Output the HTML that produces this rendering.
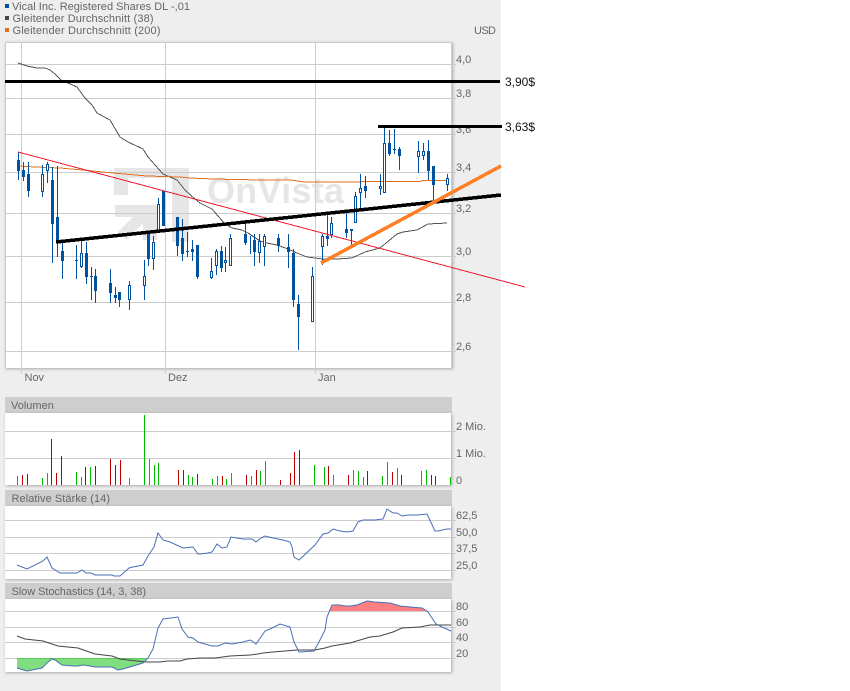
<!DOCTYPE html>
<html><head><meta charset="utf-8"><style>
html,body{margin:0;padding:0;background:#fff}
#p{position:relative;width:850px;height:691px;overflow:hidden;background:#fff}
#bg{position:absolute;left:0;top:0;width:501px;height:691px;background:#eee}
.w{position:absolute;background:#fff;box-shadow:1px 1px 3px rgba(0,0,0,.3)}
.h{position:absolute;background:#cecece;left:5px;width:447px;height:16px}
svg{position:absolute;left:0;top:0}
text{font-family:"Liberation Sans",sans-serif;font-size:11px;fill:#666}
</style></head><body><div id="p">
<div id="bg"></div>
<div class="w" style="left:5px;top:42px;width:445px;height:325px;border:1px solid #ccc;border-bottom:0"></div>
<div class="h" style="top:397px"></div>
<div class="w" style="left:5px;top:413px;width:446px;height:72px"></div>
<div class="h" style="top:490px"></div>
<div class="w" style="left:5px;top:506px;width:446px;height:73px"></div>
<div class="h" style="top:583px"></div>
<div class="w" style="left:5px;top:599px;width:446px;height:73px"></div>
<svg width="850" height="691" viewBox="0 0 850 691" fill="none">
<!-- legend -->
<rect x="5" y="4" width="4" height="4" fill="#00529f"/>
<rect x="5" y="16" width="4" height="4" fill="#444"/>
<rect x="5" y="28" width="4" height="4" fill="#e07020"/>
<text x="12" y="10" textLength="178">Vical Inc. Registered Shares DL -,01</text>
<text x="12.5" y="22" textLength="141">Gleitender Durchschnitt (38)</text>
<text x="12.5" y="34" textLength="148">Gleitender Durchschnitt (200)</text>
<text x="474" y="34" textLength="22">USD</text>
<!-- watermark -->
<path d="M114 168H189V242H172V178H128V195H114Z" fill="#e6e6e6"/>
<path d="M115 205H157V240H143V223L127 240 118 232 133 217H115Z" fill="#e6e6e6"/>
<text x="207" y="203" textLength="137" style="font-size:36px;font-weight:bold;fill:#e6e6e6">OnVista</text>
<!-- grid main -->
<g stroke="#ccc" shape-rendering="crispEdges">
<path d="M5 64.5H456M5 98.5H456M5 134.5H456M5 172.5H456M5 213.5H456M5 256.5H456M5 302.5H456M5 351.5H456"/>
<path d="M21.5 42V374M165.5 42V374M315.5 42V374"/>
<path d="M5 431.5H456M5 458.5H456M5 520.5H456M5 537.5H456M5 553.5H456M5 570.5H456M5 611.5H456M5 627.5H456M5 642.5H456M5 658.5H456"/>
</g>
<!-- axis labels -->
<text x="456" y="63">4,0</text><text x="456" y="97">3,8</text><text x="456" y="133">3,6</text><text x="456" y="171">3,4</text><text x="456" y="212">3,2</text><text x="456" y="255">3,0</text><text x="456" y="301">2,8</text><text x="456" y="350">2,6</text>
<text x="24.5" y="381">Nov</text><text x="168" y="381">Dez</text><text x="318" y="381">Jan</text>
<text x="11" y="409">Volumen</text><text x="11.5" y="502" textLength="98.5">Relative Stärke (14)</text><text x="11.5" y="595" textLength="134.5">Slow Stochastics (14, 3, 38)</text>
<text x="456" y="430">2 Mio.</text><text x="456" y="457">1 Mio.</text><text x="456" y="484">0</text>
<text x="456" y="519">62,5</text><text x="456" y="536">50,0</text><text x="456" y="552">37,5</text><text x="456" y="569">25,0</text>
<text x="456" y="610">80</text><text x="456" y="626">60</text><text x="456" y="641">40</text><text x="456" y="657">20</text>
<!-- moving averages -->
<polyline shape-rendering="crispEdges" stroke="#555" stroke-width="1" points="18,63 27,66 37,68 45,68 50,70 55,74 62,81 68,83 77,87 85,98 92,105 97,113 110,120 120,137 128,142 143,149 148,157 163,174 177,180 185,190 195,199 200,203 212,209 225,224 232,228 242,230 248,233 260,241 267,243 277,245 288,249 297,253 307,257 323,259 337,259 352,258 365,252 380,248 397,234 403,232 417,230 428,224 447,223"/>
<polyline shape-rendering="crispEdges" stroke="#e07020" stroke-width="1" points="18,166 35,167 60,168 93,171 113,173 147,176 180,177 190,178 213,179 260,180 290,180 305,182 360,182 363,181.5 420,181.5 422,180.5 447,180.5"/>
<!-- candles -->
<g shape-rendering="crispEdges">
<path stroke="#00529f" d="M18.5 152V180M23.5 162V181M28.5 162V197M42.5 165V197M47.5 162V183M52.5 167V263M57.5 166V257M62.5 240V279M76.5 245V279M81.5 241V268M86.5 242V284M91.5 267V300M95.5 269V303M110.5 269V303M115.5 287V303M119.5 292V307M129.5 281V310M144.5 260V300M148.5 232V266M153.5 236V270M158.5 198V232M163.5 191V226M177.5 217V256M182.5 219V261M187.5 232V257M192.5 240V261M197.5 245V279M211.5 258V279M216.5 249V275M221.5 246V272M225.5 247V272M230.5 234V266M245.5 222V245M250.5 236V254M254.5 234V266M259.5 234V263M264.5 234V266M278.5 234V252M288.5 234V268M293.5 249V307M298.5 295V350M312.5 267V322M322.5 234V265M327.5 215V246M331.5 217V238M346.5 210V238M351.5 229V245M355.5 192V223M360.5 174V210M365.5 176V198M380.5 174V195M384.5 127V193M389.5 130V156M394.5 129V154M399.5 147V170M418.5 141V173M423.5 143V160M428.5 140V180M433.5 166V203M447.5 174V191"/>
<path stroke="#00529f" d="M75 260.5H78M90 276.5H93M186 251.5H189M393 149.5H396"/>
<path fill="#00529f" d="M17 160h3v11h-3zM22 170h3v7h-3zM27 174h3v17h-3zM51 180h3v44h-3zM56 217h3v25h-3zM61 251h3v10h-3zM85 253h3v24h-3zM94 276h3v15h-3zM109 283h3v10h-3zM114 295h3v3h-3zM118 292h3v8h-3zM147 233h3v26h-3zM162 191h3v35h-3zM176 217h3v29h-3zM181 238h3v16h-3zM191 249h3v3h-3zM196 245h3v32h-3zM220 251h3v17h-3zM244 234h3v9h-3zM253 240h3v12h-3zM277 238h3v8h-3zM287 247h3v5h-3zM292 253h3v47h-3zM297 304h3v13h-3zM326 236h3v3h-3zM345 229h3v4h-3zM350 229h3v2h-3zM364 186h3v5h-3zM388 143h3v11h-3zM398 149h3v7h-3zM427 151h3v20h-3zM432 166h3v19h-3z"/>
<path fill="#fff" stroke="#00529f" d="M41.5 174.5h2v17h-2zM46.5 164.5h2v6h-2zM80.5 253.5h2v13h-2zM128.5 285.5h2v14h-2zM143.5 276.5h2v9h-2zM152.5 242.5h2v16h-2zM157.5 204.5h2v27h-2zM210.5 271.5h2v6h-2zM215.5 251.5h2v14h-2zM224.5 260.5h2v2h-2zM229.5 238.5h2v27h-2zM258.5 241.5h2v11h-2zM263.5 236.5h2v10h-2zM311.5 276.5h2v45h-2zM321.5 236.5h2v10h-2zM330.5 223.5h2v11h-2zM354.5 196.5h2v26h-2zM359.5 188.5h2v4h-2zM379.5 186.5h2v2h-2zM383.5 143.5h2v49h-2zM417.5 151.5h2v5h-2zM422.5 151.5h2v4h-2zM446.5 178.5h2v6h-2z"/>
</g>
<!-- trend lines -->
<path shape-rendering="crispEdges" stroke="#ee1c2c" stroke-width="1" d="M18 152L525 287"/>
<path stroke="#000" stroke-width="3.5" d="M56 242L501 195" shape-rendering="crispEdges"/>
<path stroke="#ff7f27" stroke-width="3.5" d="M321 263L501 166" shape-rendering="crispEdges"/>
<g shape-rendering="crispEdges" fill="#000"><rect x="5" y="80" width="495" height="3"/><rect x="378" y="125" width="124" height="3"/></g>
<text x="505" y="86" style="font-size:12px;fill:#111">3,90$</text>
<text x="505" y="131" style="font-size:12px;fill:#111">3,63$</text>
<!-- volume -->
<g shape-rendering="crispEdges">
<path stroke="#00bb00" d="M17.5 476V485M42.5 478V485M47.5 473V485M76.5 472V485M81.5 477V485M90.5 467V485M129.5 478V485M144.5 415V485M149.5 459V485M154.5 465V485M158.5 463V485M188.5 475V485M192.5 477V485M212.5 479V485M217.5 476V485M226.5 479V485M231.5 473V485M251.5 476V485M260.5 471V485M265.5 461V485M314.5 465V485M324.5 467V485M333.5 475V485M353.5 470V485M358.5 471V485M363.5 477V485M382.5 476V485M387.5 462V485M397.5 468V485M421.5 471V485M426.5 470V485M450.5 477V485"/>
<path stroke="#bb0000" d="M22.5 475V485M27.5 474V485M51.5 439V485M56.5 473V485M61.5 456V485M85.5 467V485M95.5 466V485M110.5 459V485M115.5 465V485M120.5 460V485M178.5 470V485M183.5 470V485M197.5 474V485M222.5 476V485M246.5 475V485M256.5 470V485M280.5 480V485M290.5 473V485M294.5 452V485M299.5 450V485M328.5 466V485M348.5 475V485M367.5 471V485M392.5 472V485M401.5 475V485M431.5 475V485M435.5 476V485"/>
</g>
<!-- rsi -->
<polyline stroke="#4a6fb5" stroke-width="1" points="17,565 27,569 43,561 47,557 52,568 60,573 77,573 82,570 86,573 91,573 95,575 112,575 114,576 120,576 129,568 133,567 143,565 148,556 154,547 158,533 163,540 170,542 183,548 193,547 198,554 200,554 208,553 212,552 217,544 222,548 227,547 231,537 237,538 243,539 249,539 252,539 256,542 261,538 265,536 273,538 283,540 290,542 292,547 294,557 299,560 315,545 323,534 328,533 333,529 340,531 347,532 353,531 358,522 363,520 375,520 383,519 387,509 393,513 397,513 402,516 408,515 417,515 427,514 435,531 438,531 447,529 451,529"/>
<!-- stochastics -->
<polygon fill="#80dd80" points="17,658 147,658 143,663 133,666 123,669 118,670 112,667 95,667 90,666 83,665 78,666 73,666 62,665 55,660 52,659 47,663 42,668 27,671 17,668"/>
<path stroke="#5cc55c" d="M17 658.5H147"/>
<polygon fill="#ff8080" points="330,611 332,605 340,605 345,606 350,606 357,605 367,601 375,602 390,603 400,606 410,607 422,608 428,611"/>
<polyline stroke="#444" stroke-width="1" points="17,636 25,639 43,641 58,646 78,648 95,654 112,656 120,659 137,661 147,662 160,662 167,661 180,661 187,659 200,658 215,658 230,656 250,655 258,654 263,653 273,652 285,651 297,650 315,650 325,648 332,646 350,643 370,637 380,636 393,632 402,628 420,627 430,625 451,625"/>
<polyline stroke="#4a6fb5" stroke-width="1" points="17,668 27,671 42,668 47,663 52,659 55,660 62,665 73,666 78,666 83,665 90,666 95,667 112,667 118,670 123,669 133,666 143,663 148,658 153,649 158,628 163,619 178,617 182,629 188,637 193,638 198,642 212,646 218,646 225,643 232,644 243,642 250,640 252,641 256,644 261,637 265,631 270,629 280,624 290,627 294,642 299,652 314,651 320,640 325,630 327,617 332,605 340,605 345,606 350,606 357,605 367,601 375,602 390,603 400,606 410,607 422,608 428,612 436,624 442,627 451,631"/>
</svg>
</div></body></html>
